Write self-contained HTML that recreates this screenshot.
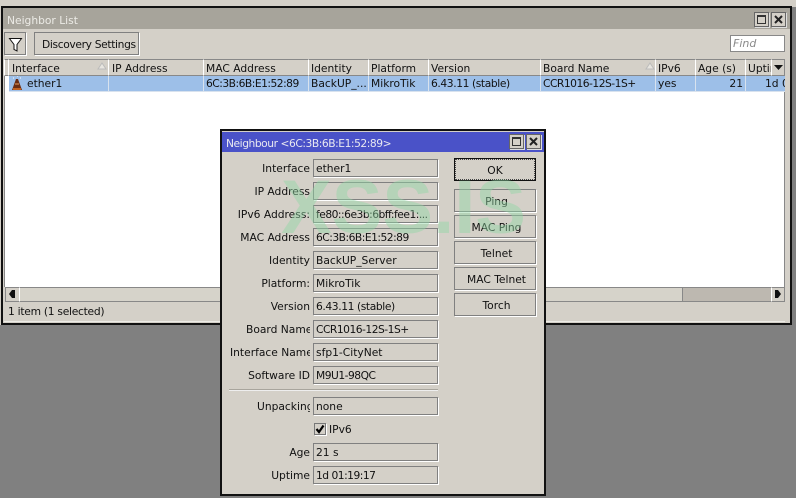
<!DOCTYPE html>
<html><head><meta charset="utf-8"><style>
html,body{margin:0;padding:0}
body{width:796px;height:498px;overflow:hidden;position:relative;background:#d4d0c8;font:10.7px "DejaVu Sans",sans-serif;color:#111}
div,span{position:absolute;box-sizing:border-box;white-space:nowrap}
.n{letter-spacing:-.5px}
.t{line-height:14px;margin-top:1px}
.h{top:59px;height:17px;background:#d4d0c8;border-left:1px solid #fff;border-top:1px solid #888;border-right:1px solid #888;border-bottom:1px solid #888;line-height:17px;padding-left:2px;overflow:hidden}
.r{top:76px;height:16px;background:#9dbfe8;border-right:1px solid #d8e2ee;border-bottom:1px solid #d8e2ee;line-height:15px;padding-left:2px;overflow:hidden}
.l{right:486px;width:82px;text-align:right;line-height:14px;overflow:hidden;height:14px;margin-top:1px}
.c{right:auto;text-align:left}
.f{left:313px;width:125px;height:18px;background:#d4d0c8;border:1px solid #808080;box-shadow:1px 1px 0 #fff;padding-left:2px;line-height:17px;overflow:hidden}
.b{left:454px;width:82px;height:23px;border:1px solid #808080;box-shadow:1px 1px 0 #fff;text-align:center;line-height:24px;padding-left:3px;background:#d4d0c8}
.w{width:15px;height:15px;background:#d4d0c8;border:1px solid #666;box-shadow:1px 1px 0 #ddd}
</style></head><body>
<div style="left:0;top:325px;width:796px;height:173px;background:#808080"></div>
<div style="left:792px;top:7px;width:4px;height:318px;background:#808080"></div>
<div style="left:1px;top:6px;width:791px;height:319px;background:#d4d0c8;border:2px solid #111"></div>
<div style="left:3px;top:8px;width:787px;height:21px;background:#a7a49b"></div>
<div class="t" style="left:7px;top:13px;color:#ecebe6">Neighbor List</div>
<div class="w" style="left:754px;top:12px"><div style="left:2px;top:2px;width:9px;height:9px;border:1px solid #333;border-top-width:2px"></div></div>
<div class="w" style="left:771px;top:12px"><svg width="13" height="13" style="position:absolute;left:0;top:0"><path d="M3 3L10 10M10 3L3 10" stroke="#222" stroke-width="2"/></svg></div>

<div style="left:4px;top:32px;width:22px;height:23px;border:1px solid #808080;box-shadow:1px 1px 0 #fff"><svg width="20" height="21" style="position:absolute;left:0;top:0"><path d="M4.500 5.500H16.500L12 11.500V18L9 16.500V11.500Z" fill="#fff" stroke="#111" stroke-width="1"/></svg></div>
<div style="left:34px;top:32px;width:105px;height:23px;border:1px solid #808080;box-shadow:1px 1px 0 #fff;line-height:23px;padding-left:7px;letter-spacing:-.35px">Discovery Settings</div>
<div style="left:730px;top:35px;width:55px;height:17px;background:#fff;border:1px solid #888;font-style:italic;color:#8a8a8a;line-height:15px;padding-left:2px;font-size:11px">Find</div>

<div style="left:4px;top:59px;width:781px;height:228px;background:#fff;border-left:1px solid #888;border-right:1px solid #888"></div>
<div class="h" style="left:4px;width:5px"></div>
<div class="h" style="left:8px;width:101px;padding-left:3px">Interface</div>
<div class="h" style="left:108px;width:96px;padding-left:3px">IP Address</div>
<div class="h" style="left:203px;width:106px;padding-left:2px">MAC Address</div>
<div class="h" style="left:308px;width:61px;padding-left:2px">Identity</div>
<div class="h" style="left:368px;width:61px;padding-left:2px">Platform</div>
<div class="h" style="left:428px;width:113px;padding-left:2px">Version</div>
<div class="h" style="left:540px;width:116px;padding-left:2px">Board Name</div>
<div class="h" style="left:655px;width:41px;padding-left:2px">IPv6</div>
<div class="h" style="left:695px;width:51px;padding-left:2px">Age (s)</div>
<div class="h" style="left:745px;width:27px;padding-left:2px">Uptime</div>
<div class="h" style="left:771px;width:14px"></div>
<svg width="796" height="100" style="position:absolute;left:0;top:0"><path d="M98 69L102 63L106 69Z" fill="#e8e6e0" stroke="#bbb"/><path d="M646 69L650 63L654 69Z" fill="#e8e6e0" stroke="#bbb"/><path d="M774 65H783L778.500 70Z" fill="#111"/></svg>

<div class="r" style="left:9px;width:100px;padding-left:18px">ether1</div>
<svg width="14" height="16" style="position:absolute;left:10px;top:76px"><path d="M6 3H8L12 14H2Z" fill="#6b2d12"/><path d="M5 8H9" stroke="#e8a060"/><path d="M3 13H11" stroke="#c06020" stroke-width="2"/><path d="M3 2h1M10 2h1M7 0h1" stroke="#fff"/></svg>
<div class="r" style="left:109px;width:95px"></div>
<div class="r n" style="left:204px;width:105px">6C:3B:6B:E1:52:89</div>
<div class="r" style="left:309px;width:60px">BackUP_...</div>
<div class="r" style="left:369px;width:60px">MikroTik</div>
<div class="r" style="left:429px;width:112px;letter-spacing:-.4px">6.43.11 (stable)</div>
<div class="r n" style="left:541px;width:115px">CCR1016-12S-1S+</div>
<div class="r" style="left:656px;width:40px">yes</div>
<div class="r" style="left:696px;width:50px;text-align:right;padding-right:2px">21</div>
<div class="r" style="left:746px;width:39px;padding-left:19px;border-right:0">1d 0</div>

<div style="left:5px;top:287px;width:780px;height:15px;background:#d6d3ca;border-top:1px solid #888;border-bottom:1px solid #888"></div>
<div style="left:682px;top:288px;width:89px;height:13px;background:#bdb8b0;border-left:1px solid #888"></div>
<div style="left:771px;top:287px;width:14px;height:15px;background:#d4d0c8;border:1px solid #888;border-left-color:#fff"></div>
<div style="left:5px;top:287px;width:15px;height:15px;background:#d4d0c8;border:1px solid #888;border-right-color:#fff"></div>
<svg width="796" height="20" style="position:absolute;left:0;top:286px"><path d="M9 8L12 4H15V12H12Z M775 4H778L781 8L778 12H775Z" fill="#111"/></svg>
<div class="t" style="left:8px;top:304px;letter-spacing:-.27px">1 item (1 selected)</div>
<div style="left:4px;top:321px;width:781px;height:1px;background:#ecebe6"></div>

<div style="left:220px;top:129px;width:326px;height:367px;background:#d4d0c8;border:2px solid #111"></div>
<div style="left:222px;top:132px;width:322px;height:20px;background:#4a52c8"></div>
<div class="t" style="left:226px;top:136px;color:#e8e8f0;letter-spacing:-.45px">Neighbour &lt;6C:3B:6B:E1:52:89&gt;</div>
<div class="w" style="left:509px;top:134px"><div style="left:2px;top:2px;width:9px;height:9px;border:1px solid #333;border-top-width:2px"></div></div>
<div class="w" style="left:526px;top:134px"><svg width="13" height="13" style="position:absolute;left:0;top:0"><path d="M3 3L10 10M10 3L3 10" stroke="#222" stroke-width="2"/></svg></div>

<div class="l" style="top:161px">Interface</div><div class="f" style="top:159px">ether1</div>
<div class="l" style="top:184px">IP Address</div><div class="f" style="top:182px"></div>
<div class="l" style="top:207px">IPv6 Address:</div><div class="f n" style="top:205px">fe80::6e3b:6bff:fee1:...</div>
<div class="l" style="top:230px">MAC Address</div><div class="f n" style="top:228px">6C:3B:6B:E1:52:89</div>
<div class="l" style="top:253px">Identity</div><div class="f" style="top:251px">BackUP_Server</div>
<div class="l" style="top:276px">Platform:</div><div class="f" style="top:274px">MikroTik</div>
<div class="l" style="top:299px">Version</div><div class="f" style="top:297px;letter-spacing:-.4px">6.43.11 (stable)</div>
<div class="l c" style="top:322px;left:246px;width:64px">Board Name</div><div class="f n" style="top:320px">CCR1016-12S-1S+</div>
<div class="l c" style="top:345px;left:230px;width:80px">Interface Name</div><div class="f" style="top:343px">sfp1-CityNet</div>
<div class="l" style="top:368px">Software ID</div><div class="f n" style="top:366px">M9U1-98QC</div>
<div style="left:229px;top:389px;width:209px;height:2px;background:#a8a59d;border-bottom:1px solid #eee"></div>
<div class="l c" style="top:399px;left:257px;width:53px">Unpacking</div><div class="f" style="top:397px">none</div>
<div style="left:314px;top:423px;width:12px;height:12px;background:#d4d0c8;border:1px solid #777;box-shadow:1px 1px 0 #fff"><svg width="10" height="10" style="position:absolute;left:0;top:0"><path d="M1.500 5L4 8L8.500 1.500" stroke="#000" stroke-width="2.200" fill="none"/></svg></div>
<div class="t" style="left:329px;top:422px">IPv6</div>
<div class="l" style="top:445px">Age</div><div class="f" style="top:443px">21 s</div>
<div class="l" style="top:468px">Uptime</div><div class="f n" style="top:466px">1d 01:19:17</div>

<div class="b" style="top:158px;border:1px solid #111;box-shadow:none;padding:0"><div style="left:0;top:0;right:0;bottom:0;border:1px dotted #444;line-height:21px">OK</div></div>
<div class="b" style="top:189px">Ping</div>
<div class="b" style="top:215px">MAC Ping</div>
<div class="b" style="top:241px">Telnet</div>
<div class="b" style="top:267px">MAC Telnet</div>
<div class="b" style="top:293px">Torch</div>

<div style="left:281px;top:158px;font:bold 76px/100px 'Liberation Sans',sans-serif;color:rgba(145,215,165,.45)">XSS.IS</div>
</body></html>
